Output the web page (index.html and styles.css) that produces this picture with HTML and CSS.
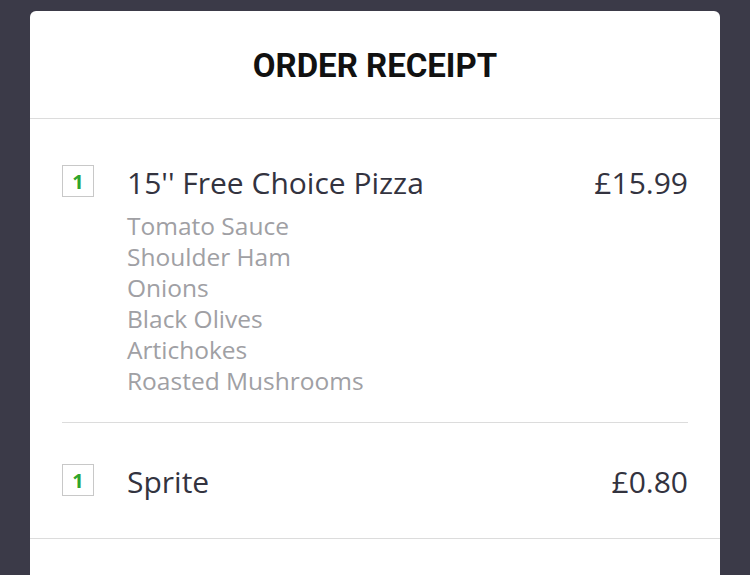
FILE: index.html
```html
<!DOCTYPE html>
<html>
<head>
<meta charset="utf-8">
<link rel="stylesheet" href="styles.css">
</head>
<body>
<div class="card">
  <div class="header">ORDER RECEIPT</div>
  <div class="items">
    <div class="item">
      <div class="qty">1</div>
      <div class="info">
        <div class="name">15'' Free Choice Pizza</div>
        <ul class="options">
          <li>Tomato Sauce</li>
          <li>Shoulder Ham</li>
          <li>Onions</li>
          <li>Black Olives</li>
          <li>Artichokes</li>
          <li>Roasted Mushrooms</li>
        </ul>
      </div>
      <div class="price">£15.99</div>
    </div>
    <div class="item last">
      <div class="qty">1</div>
      <div class="info">
        <div class="name">Sprite</div>
      </div>
      <div class="price">£0.80</div>
    </div>
  </div>
</div>
</body>
</html>
```
FILE: styles.css
```css
html, body {
  margin: 0;
  padding: 0;
  background: #3b3a48;
  height: 100%;
  overflow: hidden;
}
body {
  padding: 11px 30px 0;
  box-sizing: border-box;
  font-family: "Open Sans", "Noto Sans", sans-serif;
}
.card {
  background: #fff;
  border-radius: 6px 6px 0 0;
  height: 100%;
}
.header {
  height: 108px;
  border-bottom: 1px solid #dcdcdc;
  display: flex;
  align-items: center;
  justify-content: center;
  font-family: "Roboto", "DejaVu Sans", sans-serif;
  font-weight: bold;
  font-size: 33px;
  color: #111;
  padding-top: 2px;
  box-sizing: border-box;
}
.items {
  padding: 0 32px;
  border-bottom: 1px solid #dcdcdc;
}
.item {
  display: flex;
  align-items: flex-start;
  border-bottom: 1px solid #dcdcdc;
  padding: 46px 0 26px;
}
.item.last {
  border-bottom: none;
  padding: 41px 0 38px;
}
.qty {
  width: 30px;
  height: 30px;
  border: 1px solid #c8c8c8;
  color: #2ea52e;
  font-weight: bold;
  font-size: 20px;
  display: flex;
  align-items: center;
  justify-content: center;
  flex: none;
}
.info {
  flex: 1;
  margin-left: 33px;
}
.name {
  font-size: 30px;
  line-height: 36px;
  color: #33333f;
}
.options {
  list-style: none;
  margin: 9px 0 0;
  padding: 0;
  font-size: 24.5px;
  line-height: 31px;
  color: #a0a0a4;
}
.price {
  font-size: 30px;
  line-height: 36px;
  color: #33333f;
}
```
